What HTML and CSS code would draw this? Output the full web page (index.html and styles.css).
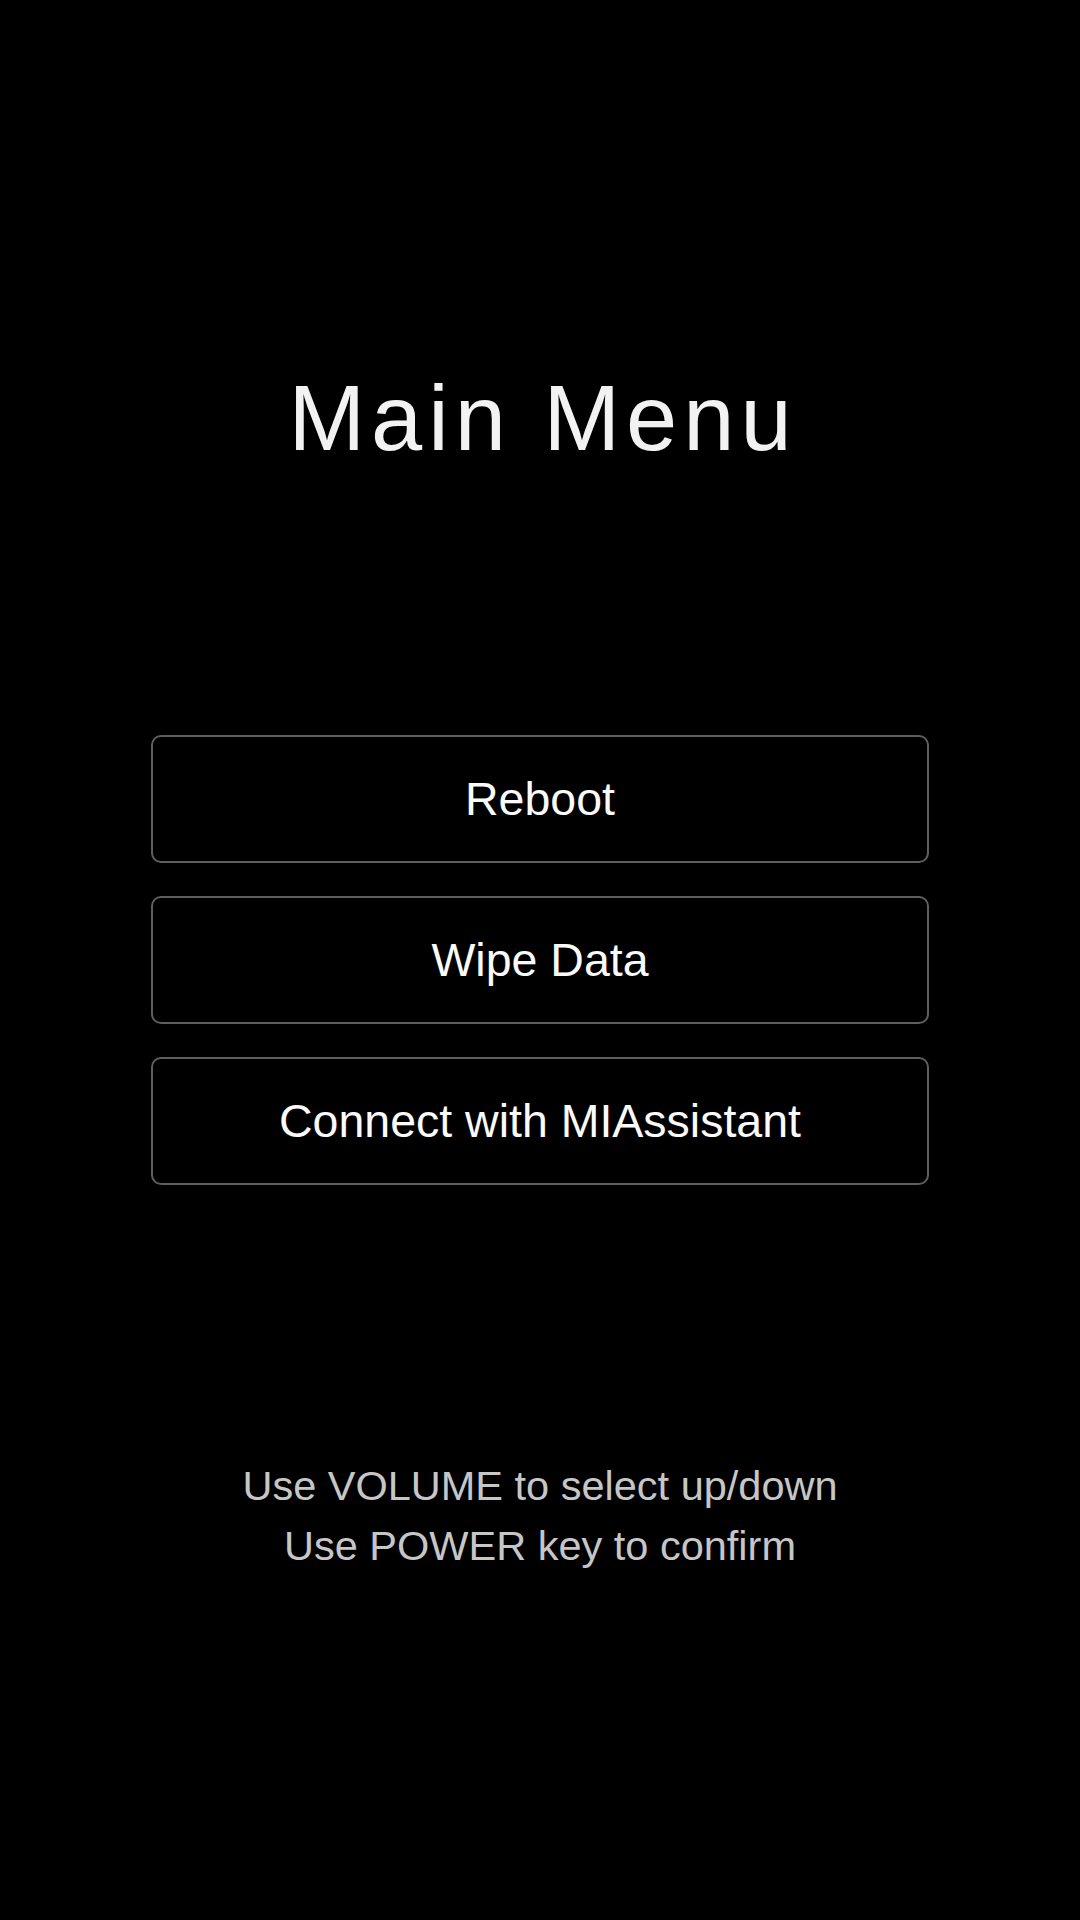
FILE: index.html
```html
<!DOCTYPE html>
<html lang="en">
<head>
<meta charset="utf-8">
<title>Main Menu</title>
<link rel="stylesheet" href="styles.css">
</head>
<body>
<main class="screen">
  <h1 class="title">Main Menu</h1>
  <nav class="menu">
    <div class="menu-item">Reboot</div>
    <div class="menu-item">Wipe Data</div>
    <div class="menu-item">Connect with MIAssistant</div>
  </nav>
  <p class="hint">Use VOLUME to select up/down<br>Use POWER key to confirm</p>
</main>
</body>
</html>
```

FILE: styles.css
```css
html, body {
  margin: 0;
  padding: 0;
  background: #000;
}

body {
  width: 1080px;
  height: 1920px;
  font-family: "Liberation Sans", Arial, sans-serif;
  overflow: hidden;
}

.screen {
  display: flex;
  flex-direction: column;
  align-items: center;
  padding-top: 363px;
}

.title {
  margin: 0;
  font-size: 92px;
  font-weight: 400;
  line-height: 110px;
  letter-spacing: 6px;
  color: #f2f2f2;
  text-indent: 6px;
}

.menu {
  margin-top: 262px;
  display: flex;
  flex-direction: column;
  gap: 33px;
}

.menu-item {
  box-sizing: border-box;
  width: 778px;
  height: 128px;
  border: 2px solid #5e5e5e;
  border-radius: 10px;
  display: flex;
  align-items: center;
  justify-content: center;
  font-size: 46.5px;
  line-height: 46px;
  color: #fafafa;
}

.hint {
  margin: 271px 0 0;
  font-size: 41.5px;
  line-height: 60px;
  text-align: center;
  color: #c6c6c6;
}
```
